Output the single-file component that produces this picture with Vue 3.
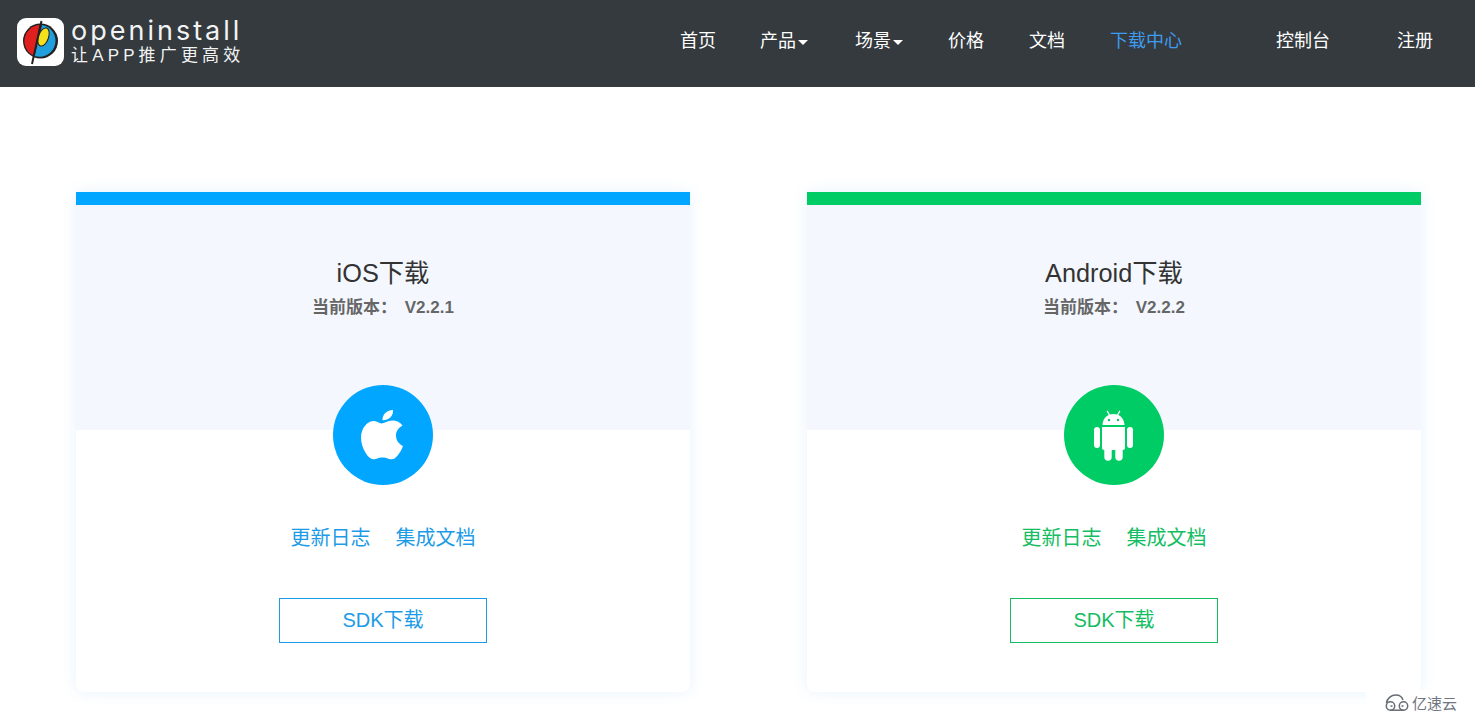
<script setup>
const navItems = [
  { label: '首页', gap: 44 },
  { label: '产品', caret: true, gap: 47 },
  { label: '场景', caret: true, gap: 45 },
  { label: '价格', gap: 45 },
  { label: '文档', gap: 45 },
  { label: '下载中心', active: true, gap: 94 },
  { label: '控制台', gap: 67 },
  { label: '注册', gap: 0 }
]

const cards = [
  { name: 'iOS下载', version: 'V2.2.1', kind: 'ios' },
  { name: 'Android下载', version: 'V2.2.2', kind: 'android' }
]
</script>

<template>
  <div class="page">
    <header class="topbar">
      <a class="brand">
        <span class="brand-icon">
          <svg width="47" height="48" viewBox="0 0 47 48">
            <circle cx="23.500" cy="23" r="17.500" fill="#23201f" />
            <path d="M22.500 7A16 16 0 0 0 16.500 37.400z" fill="#e0201f" />
            <path d="M25 7A16 16 0 1 1 17.500 38z" fill="#1f9fdc" />
            <ellipse cx="26.500" cy="19" rx="5" ry="9.500" transform="rotate(20 26.500 19)" fill="#f4e01c" stroke="#23201f" />
            <path d="M24.500 3L15 46" stroke="#23201f" stroke-width="2" fill="none" />
          </svg>
        </span>
        <span class="brand-text">
          <span class="brand-name">openinstall</span>
          <span class="brand-slogan">让APP推广更高效</span>
        </span>
      </a>
      <nav class="nav">
        <a
          v-for="item in navItems"
          :key="item.label"
          class="nav-item"
          :class="{ active: item.active }"
          :style="{ marginRight: item.gap + 'px' }"
        >
          {{ item.label }}<i v-if="item.caret" class="caret"></i>
        </a>
      </nav>
    </header>

    <main class="downloads">
      <section v-for="card in cards" :key="card.kind" class="card" :class="card.kind">
        <div class="card-head">
          <h2 class="card-title">{{ card.name }}</h2>
          <p class="card-version">当前版本： <span class="version-num">{{ card.version }}</span></p>
        </div>
        <div class="card-body">
          <div class="badge">
            <svg v-if="card.kind === 'ios'" width="46" height="52" viewBox="0 0 46 52">
              <path d="M33 1c.3 3-.8 5.500-2.500 7.300-2 2-4.500 3-8 3-.3-3 1-5.500 2.800-7.300 2-2 5-3 7.700-3z" fill="#fff" />
              <path d="M21.500 14.500c3 0 6-3 11-3 4 0 7.500 1.500 10 5-4 2.500-6.500 5.500-6.500 10 0 5 3 8.500 7 10.500-1.200 3.500-3 6.500-5 9-2 2.700-4 4.300-6.500 4.300-3 0-4.500-1.800-9-1.800-4.500 0-6 1.800-9 1.800-3 0-5.500-2.500-8-6.500C2.500 39 1 33.500 1 28.500 1 19.500 7 12 14 12c3.500 0 5 2.500 7.500 2.500z" fill="#fff" />
            </svg>
            <svg v-else width="42" height="52" viewBox="0 0 42 52">
              <path d="M9.500 16c.2-4.800 2.600-8.300 6.200-10L13.600 2.200l1-.7 2.300 4c2.300-.8 4.900-.8 7.200 0l2.300-4 1 .7-2.100 3.800c3.600 1.700 6 5.200 6.200 10H9.500z" fill="#fff" />
              <circle cx="16" cy="11" r="1.200" fill="#00cc66" />
              <circle cx="25" cy="11" r="1.200" fill="#00cc66" />
              <path d="M9 18h23v21c0 1.100-.9 2-2 2h-.3v7a3.700 3.700 0 0 1-7.400 0v-7h-3.600v7a3.700 3.700 0 0 1-7.400 0v-7H11c-1.100 0-2-.9-2-2V18z" fill="#fff" />
              <rect x="1" y="18" width="6" height="21" rx="3" fill="#fff" />
              <rect x="34" y="18" width="6" height="21" rx="3" fill="#fff" />
            </svg>
          </div>
          <div class="links">
            <a class="link">更新日志</a>
            <a class="link">集成文档</a>
          </div>
          <a class="sdk-btn">SDK下载</a>
        </div>
      </section>
    </main>

    <div class="watermark">
      <svg width="26" height="18" viewBox="0 0 26 18" fill="none" stroke="#666c75" stroke-width="1.500">
        <path d="M2.500 9C3 4.500 7 1 12 1c3.500 0 6 2 7 5" />
        <circle cx="6.500" cy="12" r="4.200" />
        <circle cx="19.500" cy="12" r="4.200" />
        <path d="M6.500 16.200h13" />
        <path d="M6.500 12h2M19.500 12h-2" />
      </svg>
      <span>亿速云</span>
    </div>
  </div>
</template>

<style>
html,
body {
  margin: 0;
  background: #fff;
}
</style>

<style scoped>
.page {
  position: relative;
  height: 715px;
  overflow: hidden;
  font-family: "Liberation Sans", "Noto Sans CJK SC", sans-serif;
  color: #333;
}

.topbar {
  display: flex;
  align-items: center;
  justify-content: space-between;
  height: 87px;
  box-sizing: border-box;
  padding: 0 42px 3px 17px;
  background: #343a3e;
}

.brand {
  display: flex;
  align-items: center;
  gap: 7px;
}

.brand-icon {
  display: flex;
  width: 47px;
  height: 48px;
  border-radius: 9px;
  background: #fff;
}

.brand-text {
  display: flex;
  flex-direction: column;
  margin-top: -2px;
  color: #f2f3f3;
}

.brand-name {
  font-family: Inter, sans-serif;
  font-size: 27px;
  font-weight: 400;
  line-height: 30px;
  letter-spacing: 3px;
}

.brand-slogan {
  font-size: 17px;
  line-height: 20px;
  letter-spacing: 4.150px;
  white-space: nowrap;
}

.nav {
  display: flex;
  align-items: center;
  padding-bottom: 3px;
}

.nav-item {
  display: flex;
  align-items: center;
  font-size: 18px;
  line-height: 24px;
  color: #fff;
}

.nav-item.active {
  color: #3f9bf0;
}

.caret {
  width: 0;
  height: 0;
  margin: 3px 0 0 2px;
  border-top: 5px solid #fff;
  border-left: 5px solid transparent;
  border-right: 5px solid transparent;
}

.downloads {
  display: flex;
  gap: 117px;
  padding: 105px 0 0 76px;
}

.card {
  --accent: #00a6ff;
  --link: #1d9be6;
  width: 614px;
  height: 500px;
  box-sizing: border-box;
  border-top: 13px solid var(--accent);
  border-radius: 0 0 8px 8px;
  background: #fff;
  box-shadow: 0 0 16px rgba(90, 170, 235, 0.14);
  text-align: center;
}

.card.android {
  --accent: #00cc66;
  --link: #14bd62;
}

.card-head {
  height: 225px;
  padding-top: 52px;
  box-sizing: border-box;
  background: #f4f8fe;
}

.card-title {
  margin: 0;
  font-size: 25.300px;
  font-weight: 400;
  line-height: 32px;
  color: #333;
}

.card-version {
  margin: 6px 0 0;
  font-size: 17px;
  font-weight: 700;
  line-height: 26px;
  color: #666;
}

.version-num {
  margin-left: 3px;
}

.card-body {
  display: flex;
  flex-direction: column;
  align-items: center;
}

.badge {
  position: relative;
  display: flex;
  align-items: center;
  justify-content: center;
  width: 100px;
  height: 100px;
  margin-top: -45px;
  border-radius: 50%;
  background: var(--accent);
}

.links {
  display: flex;
  gap: 25px;
  margin-top: 39px;
}

.link {
  font-size: 20px;
  line-height: 28px;
  color: var(--link);
}

.sdk-btn {
  display: block;
  width: 208px;
  height: 45px;
  margin-top: 46px;
  box-sizing: border-box;
  border: 1px solid var(--link);
  font-size: 20px;
  line-height: 43px;
  color: var(--link);
}

.watermark {
  position: absolute;
  right: 0;
  bottom: 0;
  display: flex;
  align-items: center;
  gap: 2px;
  width: 109px;
  height: 25px;
  padding-left: 18px;
  box-sizing: border-box;
  background: #fff;
  font-size: 15px;
  color: #6f7680;
}
</style>
